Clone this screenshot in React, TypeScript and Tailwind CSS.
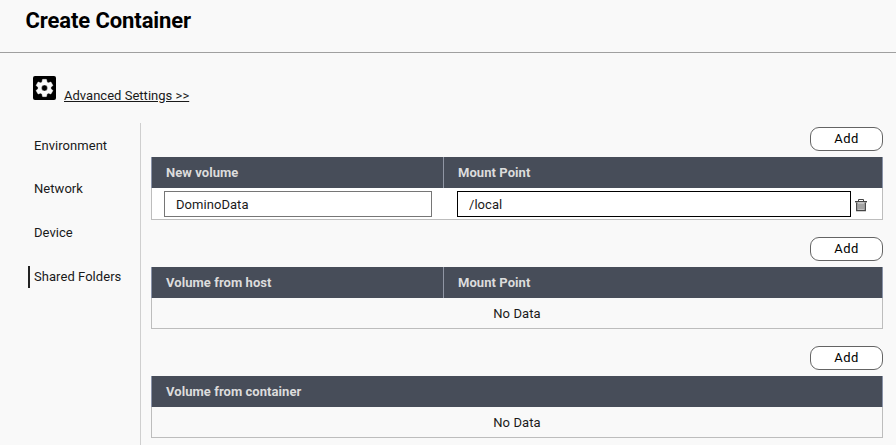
import React from "react";

const tabs = [
  { label: "Environment", cls: "mt-3" },
  { label: "Network", cls: "mt-[21px]" },
  { label: "Device", cls: "mt-[22px]" },
  { label: "Shared Folders", cls: "mt-[22px]", active: true },
];

function SettingsIcon() {
  return (
    <svg className="block h-6 w-[23px] shrink-0" viewBox="0 0 23 24">
      <rect width="23" height="24" rx="2" fill="#000" />
      <path
        transform="translate(0.7 1.2) scale(0.9)"
        fill="#f9f9f9"
        stroke="#f9f9f9"
        strokeWidth="0.4"
        d="M19.14 12.94c.04-.3.06-.61.06-.94 0-.32-.02-.64-.07-.94l2.03-1.58a.49.49 0 0 0 .12-.61l-1.92-3.32a.488.488 0 0 0-.59-.22l-2.39.96c-.5-.38-1.03-.7-1.62-.94l-.36-2.54a.484.484 0 0 0-.48-.41h-3.84c-.24 0-.43.17-.47.41l-.36 2.54c-.59.24-1.13.57-1.62.94l-2.39-.96c-.22-.08-.47 0-.59.22L2.74 8.87c-.12.21-.08.47.12.61l2.03 1.58c-.05.3-.09.63-.09.94s.02.64.07.94l-2.03 1.58a.49.49 0 0 0-.12.61l1.92 3.32c.12.22.37.29.59.22l2.39-.96c.5.38 1.03.7 1.62.94l.36 2.54c.05.24.24.41.48.41h3.84c.24 0 .44-.17.47-.41l.36-2.54c.59-.24 1.13-.56 1.62-.94l2.39.96c.22.08.47 0 .59-.22l1.92-3.32c.12-.22.07-.47-.12-.61l-2.01-1.58zM12 15.3a3.3 3.3 0 1 1 0-6.6 3.3 3.3 0 0 1 0 6.6z"
      />
    </svg>
  );
}

function TrashIcon() {
  return (
    <svg className="block h-[13px] w-3" viewBox="0 0 12 13" fill="none" stroke="#444">
      <path d="M3.5 2.5v-2h5v2" />
      <path d="M0 2.7h12" strokeWidth="1.4" />
      <path d="M1.7 3.5v8.1h8.6V3.5" fill="#c8c8c8" strokeWidth="1.3" />
      <path d="M4 4.8v5.4M6 4.8v5.4M8 4.8v5.4" stroke="#777" strokeWidth="0.9" />
    </svg>
  );
}

function AddButton() {
  return (
    <button className="block h-6 w-[73px] self-end rounded-[9px] border border-[#646464] bg-white text-center text-[13px] leading-[22px] tracking-[0.4px] text-black">
      Add
    </button>
  );
}

function Head({ first, second }: { first: string; second?: string }) {
  return (
    <div className="flex h-[31px] border-x border-[#8a93a8] bg-[#474d59] text-[13px] leading-[31px] font-bold tracking-[0.06px] text-[#dcdcdc]">
      {second ? (
        <>
          <div className="w-[292px] border-r border-[#9096a4] pl-[14px]">{first}</div>
          <div className="pl-[14px]">{second}</div>
        </>
      ) : (
        <div className="pl-[14px]">{first}</div>
      )}
    </div>
  );
}

function EmptyRow() {
  return (
    <div className="h-[31px] border-x border-b border-[#bdbdbd] text-center leading-[31px] tracking-[0.1px]">
      No Data
    </div>
  );
}

export default function App() {
  return (
    <div className="flex h-[445px] w-[896px] flex-col overflow-hidden bg-[#f9f9f9] font-['Roboto',sans-serif] text-[13px] tracking-[0.05px] text-[#1a1a1a]">
      <header className="h-[53px] shrink-0 border-b border-[#a0a0a0] pl-[25.5px]">
        <h1 className="pt-2 text-[22px] leading-[26px] font-bold tracking-[-0.1px] text-black">
          Create Container
        </h1>
      </header>
      <div className="flex h-[70px] shrink-0 pt-[23px] pl-[33px]">
        <SettingsIcon />
        <a className="mt-3 ml-2 leading-4 tracking-[0.02px] underline">Advanced Settings &gt;&gt;</a>
      </div>
      <div className="flex min-h-0 flex-1">
        <nav className="w-[141px] shrink-0 border-r border-[#cfcfcf] pl-7">
          {tabs.map((t) => (
            <div
              key={t.label}
              className={`h-[22px] border-l-2 pl-1 leading-[22px] ${t.cls} ${t.active ? "border-[#222]" : "border-transparent"}`}
            >
              {t.label}
            </div>
          ))}
        </nav>
        <main className="ml-[10px] w-[732px]">
          <section className="flex flex-col gap-[6px] pt-1">
            <AddButton />
            <div>
              <Head first="New volume" second="Mount Point" />
              <div className="flex h-8 border-x border-b border-[#bdbdbd] bg-white pt-[3px] pl-3">
                <input
                  className="h-[26px] w-[268px] border border-[#767676] bg-white pl-[11px] tracking-[0.05px] outline-none"
                  defaultValue="DominoData"
                />
                <input
                  className="ml-[25px] h-[26px] w-[394px] border border-black bg-white pl-[11px] tracking-[0.05px] outline-none"
                  defaultValue="/local"
                />
                <div className="mt-2 ml-1">
                  <TrashIcon />
                </div>
              </div>
            </div>
          </section>
          <section className="mt-[17px] flex flex-col gap-[6px]">
            <AddButton />
            <div>
              <Head first="Volume from host" second="Mount Point" />
              <EmptyRow />
            </div>
          </section>
          <section className="mt-[17px] flex flex-col gap-[6px]">
            <AddButton />
            <div>
              <Head first="Volume from container" />
              <EmptyRow />
            </div>
          </section>
        </main>
      </div>
    </div>
  );
}
